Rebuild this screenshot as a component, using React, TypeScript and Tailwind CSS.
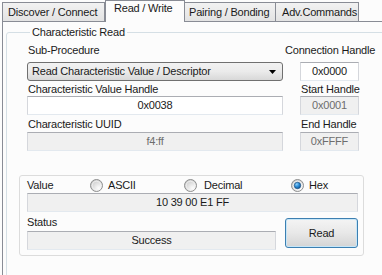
import React from "react";

const font = "font-['Liberation_Sans',Arial,sans-serif] text-[11px] tracking-[-0.2px] leading-[13px]";

function Radio({ checked }: { checked?: boolean }) {
  return (
    <svg width="13" height="13" viewBox="0 0 13 13" className="shrink-0">
      <defs>
        <radialGradient id="rg1" cx="0.7" cy="0.75" r="0.8">
          <stop offset="0" stopColor="#ffffff" />
          <stop offset="1" stopColor="#c9c9c9" />
        </radialGradient>
        <radialGradient id="rg2" cx="0.35" cy="0.3" r="0.8">
          <stop offset="0" stopColor="#8fd3ff" />
          <stop offset="0.5" stopColor="#2a8ad4" />
          <stop offset="1" stopColor="#0d4d8a" />
        </radialGradient>
      </defs>
      <circle cx="6.5" cy="6.5" r="6" fill="url(#rg1)" stroke="#8e8f8f" strokeWidth="1" />
      <circle cx="6.5" cy="6.5" r="4.3" fill="none" stroke="#f4f4f4" strokeWidth="0.8" />
      {checked && <circle cx="6.5" cy="6.5" r="3.2" fill="url(#rg2)" stroke="#1b4f80" strokeWidth="0.7" />}
    </svg>
  );
}

function TextBox({ children, disabled, className = "" }: { children: React.ReactNode; disabled?: boolean; className?: string }) {
  return (
    <div
      className={
        "h-[19px] flex items-center justify-center border border-t-[#abadb3] border-l-[#d5d7dc] border-r-[#d5d7dc] border-b-[#e3e9ef] " +
        (disabled ? "bg-[#f0f0f0] text-[#6d6d6d] " : "bg-white text-[#1a1a1a] ") +
        className
      }
    >
      {children}
    </div>
  );
}

export default function App() {
  return (
    <div className={"w-[382px] h-[275px] overflow-hidden bg-[#fcfcfc] text-[#1a1a1a] flex flex-col " + font}>
      {/* tab strip */}
      <div className="flex items-end h-[21px] pl-[2px] bg-[#fcfcfc]">
        <div className="w-[103px] h-[19px] border border-b-0 border-[#898c95] bg-gradient-to-b from-[#f2f2f2] to-[#e3e3e3] pl-[5px] pt-[3px]">
          Discover / Connect
        </div>
        <div className="w-[80px] h-[22px] -mb-px relative z-10 border border-b-0 border-[#898c95] bg-[#fcfcfc] pl-[8px] pt-[1px]">
          Read / Write
        </div>
        <div className="w-[91px] h-[19px] border border-l-0 border-b-0 border-[#898c95] bg-gradient-to-b from-[#f2f2f2] to-[#e3e3e3] pl-[4px] pt-[3px]">
          Pairing / Bonding
        </div>
        <div className="w-[83px] h-[19px] border border-l-0 border-b-0 border-[#898c95] bg-gradient-to-b from-[#f2f2f2] to-[#e3e3e3] pl-[6px] pt-[3px]">
          Adv.Commands
        </div>
      </div>
      {/* panel */}
      <div className="flex-1 ml-[2px] border-l border-t border-[#898c95] pl-[3px] pt-[4px]">
        <fieldset className="w-[400px] h-[300px] border border-[#d5dfe5] rounded-[3px] pl-[20px]">
          <legend className="ml-[3px] px-[2px]">Characteristic Read</legend>
          <div className="grid grid-cols-[256px_59px] gap-x-[17px] mt-[5px]">
            <div className="pl-[1px] h-[13px]">Sub-Procedure</div>
            <div className="-ml-[15px] whitespace-nowrap h-[13px]">Connection Handle</div>

            <div className="mt-[5px] h-[19px] border border-[#707070] rounded-[3px] bg-gradient-to-b from-[#f2f2f2] via-[#ebebeb] to-[#d8d8d8] flex items-center pl-[4px] pr-[6px]">
              <span className="flex-1">Read Characteristic Value / Descriptor</span>
              <svg width="7" height="4" viewBox="0 0 7 4"><path d="M0 0H7L3.5 4Z" fill="#000" /></svg>
            </div>
            <TextBox className="mt-[5px]">0x0000</TextBox>

            <div className="pl-[1px] mt-[2px] h-[13px] whitespace-nowrap">Characteristic Value Handle</div>
            <div className="pl-[1px] mt-[2px] h-[13px] whitespace-nowrap">Start Handle</div>

            <TextBox>0x0038</TextBox>
            <TextBox disabled>0x0001</TextBox>

            <div className="pl-[1px] mt-[3px] h-[13px]">Characteristic UUID</div>
            <div className="pl-[1px] mt-[3px] h-[13px]">End Handle</div>

            <TextBox disabled className="mt-[1px]">f4:ff</TextBox>
            <TextBox disabled className="mt-[1px]">0xFFFF</TextBox>
          </div>

          {/* lower group */}
          <div className="mt-[24px] -ml-[8px] w-[345px] h-[81px] border border-[#dcdcdc] rounded-[3px] pl-[7px] pr-[5px] pt-[3px]">
            <div className="flex items-center h-[13px]">
              <span className="w-[63px]">Value</span>
              <Radio />
              <span className="ml-[5px] w-[76px]">ASCII</span>
              <Radio />
              <span className="ml-[7px] w-[87px]">Decimal</span>
              <Radio checked />
              <span className="ml-[5px]">Hex</span>
            </div>
            <TextBox disabled className="mt-[1px] !text-[#1a1a1a]">10 39 00 E1 FF</TextBox>
            <div className="flex mt-[4px]">
              <div className="w-[249px]">
                <div className="h-[13px]">Status</div>
                <TextBox disabled className="mt-[2px] !text-[#1a1a1a]">Success</TextBox>
              </div>
              <div className="ml-[9px] mt-[2px] w-[73px] h-[30px] rounded-[3px] border border-[#3c7fb1] shadow-[inset_0_0_0_1px_#c6e6f8] bg-gradient-to-b from-[#f4f4f4] via-[#e8e8e8] to-[#d4d4d4] flex items-center justify-center">
                Read
              </div>
            </div>
          </div>
        </fieldset>
      </div>
    </div>
  );
}
